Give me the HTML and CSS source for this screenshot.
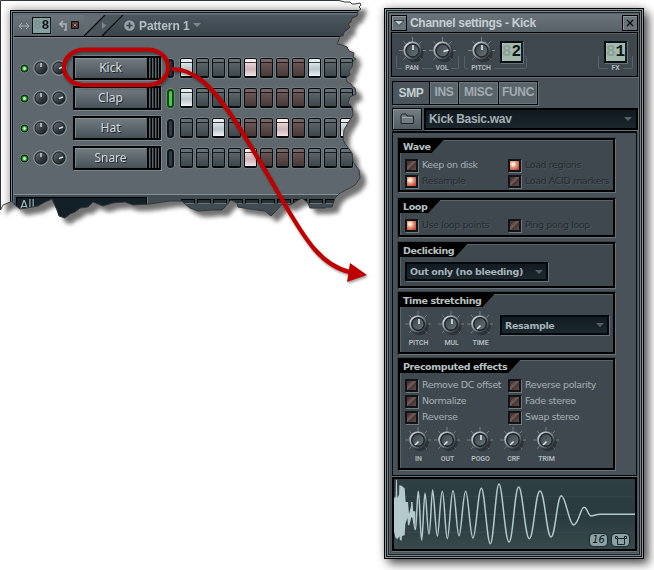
FILE: index.html
```html
<!DOCTYPE html>
<html lang="en">
<head>
<meta charset="utf-8">
<title>Channel settings</title>
<link rel="stylesheet" href="styles.css">
</head>
<body>
<svg class="defs" width="0" height="0" aria-hidden="true">
  <defs>
    <linearGradient id="rim" x1="0" y1="0" x2="1" y2="1"><stop offset="0" stop-color="#e4e8e9"/><stop offset=".5" stop-color="#7c868b"/><stop offset="1" stop-color="#1d2226"/></linearGradient>
    <linearGradient id="cap" x1="0" y1="0" x2="1" y2="1"><stop offset="0" stop-color="#39434a"/><stop offset="1" stop-color="#69747a"/></linearGradient>
    <linearGradient id="mini" x1="0" y1="0" x2="1" y2="1"><stop offset="0" stop-color="#6c757a"/><stop offset=".5" stop-color="#394146"/><stop offset="1" stop-color="#13181b"/></linearGradient>
    <symbol id="base" viewBox="0 0 28 28">
      <path d="M14 4V0M4 14H0M24 14h4M7 7L4.5 4.5M21 7l2.500-2.500M7 21l-2.500 2.500M21 21l2.500 2.500" stroke="#79848a" stroke-width="1"/>
      <circle cx="16" cy="16.500" r="9.500" fill="#171d21" opacity=".5"/>
      <circle cx="14" cy="14" r="9.500" fill="#20272c"/>
      <circle cx="14" cy="14" r="8.500" fill="none" stroke="url(#rim)" stroke-width="2"/>
      <circle cx="14" cy="14" r="6.500" fill="url(#cap)" stroke="#1d2429" stroke-width="1"/>
    </symbol>
    <symbol id="dial" viewBox="0 0 16 16">
      <circle cx="8" cy="8" r="7.300" fill="#4b555a" stroke="#929ba0" stroke-width="1"/>
      <circle cx="8" cy="8" r="5.900" fill="url(#mini)" stroke="#171d20" stroke-width=".8"/>
    </symbol>
  </defs>
</svg>
<main class="stage">
  <section class="torn">
    <div class="shot">
      <div class="rack">
        <header class="rack-head">
          <div class="head-left">
            <svg width="12" height="8" viewBox="0 0 12 8"><path d="M1 4h10M4 1L1 4l3 3M8 1l3 3-3 3" fill="none" stroke="#a5afb5"/></svg>
            <div class="lcd lcd-small"><i>8</i><b>8</b></div>
            <svg class="undo" width="21" height="11" viewBox="0 0 21 11"><path d="M4 1L1 4l3 3M1 4h6v6H5" fill="none" stroke="#a9b2b6" stroke-width="1.600"/><path d="M12.500 1.500h7v7h-7z" fill="#4f322e" stroke="#111"/><path d="M14.500 3.500l3 3M17.500 3.500l-3 3" stroke="#a58478"/></svg>
          </div>
          <svg class="slashes" width="42" height="21" viewBox="0 0 42 21"><path d="M0 0h21L0 21z" fill="#626b72"/><path d="M21 0h18L18 21H0z" fill="#4b555c"/><path d="M0 21L21 0M18 21L39 0" stroke="#080b0d" stroke-width="1.300"/><path d="M18 7l4 3.500-4 3.500z" fill="#7d878d"/></svg>
          <svg class="plus" width="11" height="11" viewBox="0 0 11 11"><circle cx="5.500" cy="5.500" r="5.300" fill="#98a2a8"/><path d="M5.500 2.500v6M2.500 5.500h6" stroke="#39434a" stroke-width="1.700"/></svg>
          <span class="pattern">Pattern 1</span>
          <svg width="8" height="5" viewBox="0 0 8 5"><path d="M0 0h8L4 4z" fill="#7c868d"/></svg>
        </header>
        <div class="tracks">
          <div class="track"><i class="led"></i><svg class="dial"><use href="#dial"/><path d="M8 3v4"/></svg><svg class="dial"><use href="#dial"/><path d="M8 8.500l4-1.500"/></svg><div class="name"><span>Kick</span><i></i></div><i class="pill"></i><div class="steps"><b class="on"></b><b></b><b></b><b></b><b class="r on"></b><b class="r"></b><b class="r"></b><b class="r"></b><b class="on"></b><b></b><b></b></div></div>
          <div class="track"><i class="led"></i><svg class="dial"><use href="#dial"/><path d="M8 3v4"/></svg><svg class="dial"><use href="#dial"/><path d="M8 8.500l4-1.500"/></svg><div class="name"><span>Clap</span><i></i></div><i class="pill lit"></i><div class="steps"><b class="on"></b><b></b><b></b><b></b><b class="r"></b><b class="r"></b><b class="r"></b><b class="r"></b><b></b><b></b><b></b></div></div>
          <div class="track"><i class="led"></i><svg class="dial"><use href="#dial"/><path d="M8 3v4"/></svg><svg class="dial"><use href="#dial"/><path d="M8 8.500l4-1.500"/></svg><div class="name"><span>Hat</span><i></i></div><i class="pill"></i><div class="steps"><b></b><b></b><b class="on"></b><b></b><b class="r"></b><b class="r"></b><b class="r on"></b><b class="r"></b><b></b><b></b><b class="on"></b></div></div>
          <div class="track"><i class="led"></i><svg class="dial"><use href="#dial"/><path d="M8 3v4"/></svg><svg class="dial"><use href="#dial"/><path d="M8 8.500l4-1.500"/></svg><div class="name"><span>Snare</span><i></i></div><i class="pill"></i><div class="steps"><b></b><b></b><b></b><b></b><b class="r on"></b><b class="r"></b><b class="r"></b><b class="r"></b><b></b><b></b><b></b></div></div>
        </div>
        <footer class="rack-foot"><div class="filter">All</div><div class="slots"><i></i><i></i><i></i><i></i><i></i><i></i><i></i><i></i><i></i><i></i></div></footer>
      </div>
    </div>
  </section>

  <section class="window">
    <header class="title">
      <div class="tbtn"><svg width="10" height="6" viewBox="0 0 10 6"><path d="M0 .5h10L5 5.500z" fill="#c3ccd0" stroke="#1b2327" stroke-width=".8"/></svg></div>
      <h1>Channel settings - Kick</h1>
      <div class="tbtn"><svg width="8" height="8" viewBox="0 0 8 8"><path d="M1 1l6 6M7 1L1 7" stroke="#06090b" stroke-width="1.300"/></svg></div>
    </header>
    <div class="top">
      <div class="bracket pv">
        <div class="knob"><svg><use href="#base"/><path d="M14 8v5"/></svg><span>PAN</span></div>
        <div class="knob"><svg><use href="#base"/><path d="M14.500 14.500l5-1.500"/></svg><span>VOL</span></div>
      </div>
      <div class="bracket pp">
        <div class="knob"><svg><use href="#base"/><path d="M14 8v5"/></svg><span>PITCH</span></div>
        <div class="lcd"><i>8</i><b>2</b></div>
      </div>
      <div class="bracket fx"><div class="lcd"><i>8</i><b>1</b></div><span>FX</span></div>
    </div>
    <nav class="tabs"><span class="active">SMP</span><span>INS</span><span>MISC</span><span>FUNC</span></nav>
    <div class="file">
      <div class="folder"><svg width="15" height="12" viewBox="0 0 15 12"><path d="M1 10.500V2l1-1h4l1 2h6.500v7.500z" fill="#717b80" stroke="#20272b"/><path d="M2 4.500h10" stroke="#a1aaae"/></svg></div>
      <div class="field">Kick Basic.wav<i class="caret"></i></div>
    </div>
    <div class="page">
      <section class="group wave"><h2>Wave</h2>
        <div class="checks"><label><i></i>Keep on disk</label><label class="dim"><i class="on"></i>Load regions</label><label class="dim"><i class="on"></i>Resample</label><label class="dim"><i></i>Load ACID markers</label></div>
      </section>
      <section class="group loop"><h2>Loop</h2>
        <div class="checks"><label class="dim"><i class="on"></i>Use loop points</label><label class="dim"><i></i>Ping pong loop</label></div>
      </section>
      <section class="group declick"><h2>Declicking</h2><div class="combo">Out only (no bleeding)<i class="caret"></i></div></section>
      <section class="group stretch"><h2>Time stretching</h2>
        <div class="knobs">
          <div class="knob"><svg><use href="#base"/><path d="M14 8v5"/></svg><span>PITCH</span></div>
          <div class="knob"><svg><use href="#base"/><path d="M14 8v5"/></svg><span>MUL</span></div>
          <div class="knob"><svg><use href="#base"/><path d="M13.500 14.500L10 18"/></svg><span>TIME</span></div>
          <div class="combo">Resample<i class="caret"></i></div>
        </div>
      </section>
      <section class="group pre"><h2>Precomputed effects</h2>
        <div class="checks"><label><i></i>Remove DC offset</label><label><i></i>Reverse polarity</label><label><i></i>Normalize</label><label><i></i>Fade stereo</label><label><i></i>Reverse</label><label><i></i>Swap stereo</label></div>
        <div class="knobs">
          <div class="knob"><svg><use href="#base"/><path d="M13.500 14.500L10 18"/></svg><span>IN</span></div>
          <div class="knob"><svg><use href="#base"/><path d="M13.500 14.500L10 18"/></svg><span>OUT</span></div>
          <div class="knob"><svg><use href="#base"/><path d="M14 8v5"/></svg><span>POGO</span></div>
          <div class="knob"><svg><use href="#base"/><path d="M13.500 14.500L10 18"/></svg><span>CRF</span></div>
          <div class="knob"><svg><use href="#base"/><path d="M13.500 14.500L10 18"/></svg><span>TRIM</span></div>
        </div>
      </section>
    </div>
    <div class="scope">
      <svg viewBox="42 43 723 210" preserveAspectRatio="none">
        <path d="M48 43v210M42 149H765M42 95H765M42 203H765" stroke="#4c5d60" stroke-width="2" opacity=".5"/>
        <path d="M42 100L47 96L48 45L51 46L52 100L57 90L58 62L67 64L69 68L74 70L77 112L84 112L87 148L93 125L96 110L99 140L106 140L106 195L100 160L94 158L88 182L84 182L82 160L76 178L74 212L66 214L65 228L60 226L58 215L52 224L46 218L42 200Z" fill="#b3c9cc"/>
        <path d="M95 112S102 195 106 195S111 80 115 80S121 226 125 226S131 86 135 86S142 208 147 208S154 76 158 76S167 214 172 214S181 80 187 80S196 222 202 222S212 78 219 78S230 213 237 213S249 80 257 80S270 220 279 220S294 71 304 71S321 237 331 237S347 58 357 58S375 232 387 232S404 67 416 67S435 222 448 222S466 79 480 79S500 217 513 217S531 93 544 93S567 181 581 181S602 128 612 128S625 154 633 154S648 149 660 149H765" fill="none" stroke="#b3c9cc" stroke-width="4.500"/>
      </svg>
      <div class="badges"><span>16</span><span><svg width="12" height="9" viewBox="0 0 12 9"><path d="M2.500 2.500h7v6h-7zM.5.500h2v2h-2zM9.500.500h2v2h-2z" fill="none" stroke="#142428"/></svg></span></div>
    </div>
  </section>

  <svg class="overlay" width="384" height="300" viewBox="0 0 384 300">
    <path class="tear" d="M.5 210V.5H339L345 2L350 2L352 4L355 4L360 3L361 5L359 7L361 9L358 11L357 16L352 18L351 22L348 24L350 27L347 30L344 32L343 36L340 36L338 42L337 44L342 45L347 47L349 51L354 53L353 57L356 59L353 61L352 67L349 71L350 75L346 78L347 82L351 84L353 87L355 88L356 94L350 97L348 103L352 107L353 115L348 123L344 130L343 140L346 145L352 153L353 162L359 170L360 178L355 185L350 188L340 193L335 198L332 207L327 207L325 208L310 208L308 203L302 198L290 205L283 203L277 210L271 216L265 211L250 209L238 207L237 203L231 200L225 207L222 210L213 210L198 211L190 208L185 204L182 201L170 201L150 204L133 205L125 202L113 203L103 206L93 202L88 207L80 208L75 212L70 214L65 218L59 216L57 210L52 199L45 202L38 206L27 208L20 209L15 205L12 201L8 203L3 205Z"/>
    <g class="mark"><rect x="64" y="49.500" width="104" height="35.500" rx="20" ry="17.500"/><path d="M172 69C196 69 213 89 229 112S262 165 284 203S322 266 350 272"/><path class="tip" d="M350 263L367 275L347 282Z"/></g>
  </svg>
</main>
</body>
</html>
```
FILE: styles.css
```css
* { box-sizing: border-box; }
body { margin: 0; background: #fff; font-family: "DejaVu Sans", sans-serif; }
.defs { position: absolute; }
.stage { position: relative; width: 654px; height: 570px; overflow: hidden; display: flex; align-items: flex-start; }
.overlay { position: absolute; left: 0; top: 0; }
.tear { fill: none; stroke: #33373a; stroke-width: 1; }
.mark { fill: none; stroke: #c00000; stroke-width: 4.2; filter: drop-shadow(1px 2px 1px rgba(0,0,0,.35)); }
.mark .tip { fill: #c00000; stroke: none; }

/* Torn-off picture of the step sequencer */
.torn { flex: none; width: 384px; height: 240px; filter: drop-shadow(6px 6px 2px rgba(0,0,0,.55)); }
.shot {
  width: 384px; height: 225px; padding: 10px 0 0 10px; background: #fff; overflow: hidden;
  clip-path: path("M0 210V0H339L345 2L350 2L352 4L355 4L360 3L361 5L359 7L361 9L358 11L357 16L352 18L351 22L348 24L350 27L347 30L344 32L343 36L340 36L338 42L337 44L342 45L347 47L349 51L354 53L353 57L356 59L353 61L352 67L349 71L350 75L346 78L347 82L351 84L353 87L355 88L356 94L350 97L348 103L352 107L353 115L348 123L344 130L343 140L346 145L352 153L353 162L359 170L360 178L355 185L350 188L340 193L335 198L332 207L327 207L325 208L310 208L308 203L302 198L290 205L283 203L277 210L271 216L265 211L250 209L238 207L237 203L231 200L225 207L222 210L213 210L198 211L190 208L185 204L182 201L170 201L150 204L133 205L125 202L113 203L103 206L93 202L88 207L80 208L75 212L70 214L65 218L59 216L57 210L52 199L45 202L38 206L27 208L20 209L15 205L12 201L8 203L3 205Z");
}
.rack {
  width: 380px; height: 220px; padding: 5px 0 0 4px; background: #5e676d; color: #c8d0d4;
  box-shadow: 0 0 9px rgba(0,0,0,.45), inset 1px 1px #000, inset 2px 2px #7b868c, inset 3px 3px #10161a, inset 4px 4px #68737a;
}
.rack-head { height: 22px; display: flex; align-items: center; background: linear-gradient(#4b565e, #39434a); border-bottom: 1px solid #000; box-shadow: 0 1px #7b858b; }
.head-left { width: 70px; height: 21px; padding: 0 0 0 4px; display: flex; align-items: center; gap: 2px; background: linear-gradient(#6a747a, #596168); }
.undo { margin-left: 6px; }
.slashes { flex: none; }
.plus { margin: 0 4px 0 -2px; }
.pattern { font: bold 12px "Liberation Sans", sans-serif; color: #b4bec4; margin-right: 4px; letter-spacing: -.1px; }
.lcd { width: 23px; height: 22px; border: 2px solid #0a0f11; border-right-color: #171f22; background: #a3b9ae; display: flex; align-items: center; justify-content: center; font: bold 15px/17px "Liberation Mono", monospace; box-shadow: 1px 1px #66727a; }
.lcd i { color: #8a9f95; font-style: normal; }
.lcd b { color: #0d1614; }
.lcd-small { width: 19px; height: 17px; font-size: 13px; border-width: 1px; background: #89a0a0; }
.lcd-small i { color: #7a9090; }

.tracks { padding-top: 16px; height: 157px; }
.track { height: 30px; padding-left: 6px; display: flex; align-items: center; }
.led { width: 9px; height: 9px; border-radius: 50%; background: radial-gradient(#eaffe0 0 10%, #35a835 30%, #0a3411 50%, #0a3411 58%, #7f8b8a 68%); margin-right: 4px; flex: none; }
.dial { width: 16px; height: 16px; margin-right: 2px; flex: none; stroke: #d6dcdf; stroke-width: 1.4; overflow: visible; }
.name { width: 88px; height: 24px; margin-left: 4px; flex: none; display: flex; border: 2px solid #040607; background: #040607; box-shadow: 1px 1px #7c868b, 0 -1px #747e82; }
.name span { width: 72px; text-align: center; background: linear-gradient(#707a7f, #49535a); border: 1px solid; border-color: #8a9498 #59636a #464f55 #7c868b; text-shadow: 1px 1px #252d31; font: 12px/17px "Noto Sans", sans-serif; color: #d4dade; padding-right: 1px; }
.name i { flex: 1; margin-left: 1px; background: repeating-linear-gradient(90deg, #000 0 1px, #5c656b 1px 2px, #2b3236 2px 3px); }
.pill { width: 7px; height: 19px; margin: 0 6px 0 6px; flex: none; border-radius: 4px; border: 2px solid #10161b; background: #303b48; box-shadow: 0 0 0 1px #727d83; }
.pill.lit { background: #59c259; border-color: #0f4a16; box-shadow: 0 0 0 1px #65916a; }
.steps { display: flex; gap: 3px; flex: none; }
.steps b { width: 13px; height: 20px; border: 2px solid #0a0d0f; border-width: 1px 1px 2px 1px; border-radius: 2px; background: linear-gradient(#666f73 0 3px, #161b1e 3px 4px, #5a6468 4px, #3e484c); box-shadow: 0 0 0 1px #6f7a7f; }
.steps .r { background: linear-gradient(#756666 0 3px, #1d1516 3px 4px, #695555 4px, #483939); }
.steps .on { background: linear-gradient(#e8eef0 0 3px, #333b3f 3px 4px, #dbe5e9 4px, #b9c5ca 60%, #f0f4f6); }
.steps .r.on { background: linear-gradient(#fff0f0 0 3px, #48383a 3px 4px, #ead5d7 4px, #cdb4b7 60%, #f3e3e4); }
.rack-foot { height: 30px; padding-left: 2px; display: flex; gap: 34px; border-top: 1px solid #858f94; background: #414c52; }
.filter { width: 131px; height: 28px; margin-top: 2px; padding: 1px 3px; background: #142027; border: 1px solid #000; box-shadow: 1px 0 #69757b; font: 12px/13px "DejaVu Sans", sans-serif; color: #a9b6bb; }
.slots { display: flex; gap: 2px; margin-top: 4px; }
.slots i { width: 14px; height: 5px; background: #263237; border: 1px solid #020405; border-bottom-color: #69757b; }

/* Channel settings window */
.window {
  flex: none; width: 260px; height: 551px; margin-top: 8px; padding: 6px 6px 0; color: #aeb7bb; background: #495259;
  box-shadow: 5px 5px 9px rgba(0,0,0,.6), 0 0 8px rgba(0,0,0,.3), inset 0 0 0 1px #000, inset 0 0 0 2px #8d979c, inset 0 0 0 3px #10161a, inset 0 0 0 4px #7b868b, inset 0 0 0 5px #1a2125, inset 0 0 0 6px #58636a;
}
.title { height: 18px; display: flex; align-items: center; padding: 0 0 0 1px; background: linear-gradient(#6a7379, #596168); }
.title h1 { flex: 1; margin: 0 0 0 3px; font: bold 12px/16px "Liberation Sans", sans-serif; letter-spacing: -.3px; color: #c5cfd4; white-space: nowrap; }
.tbtn { width: 16px; height: 16px; border: 1px solid #000; box-shadow: inset 1px 1px #8a9499; background: #69747a; display: flex; align-items: center; justify-content: center; }
.top { height: 45px; margin-left: 1px; background: #3e474d; border: 1px solid #000; box-shadow: inset 0 1px #59636a, 0 1px #68737a; padding: 4px 4px 0 4px; display: flex; }
.bracket { height: 35px; display: flex; position: relative; }
.bracket::before { content: ""; position: absolute; left: 0; right: 0; bottom: 3px; height: 12px; border: 1px solid #566168; border-top: 0; border-radius: 0 0 2px 2px; }
.knob { width: 28px; height: 36px; display: flex; flex-direction: column; align-items: center; position: relative; flex: none; }
.knob svg { width: 27px; height: 27px; overflow: visible; flex: none; stroke: #e3e8ea; stroke-width: 1.6; }
.knob svg use { stroke: none; }
.knob span, .fx span { font: 7px/8px "Roboto", sans-serif; font-weight: 600; letter-spacing: -.1px; color: #b2bbc0; padding: 0 3px; background: #3e474d; }
.pv { width: 63px; padding-left: 2px; gap: 2px; }
.pp { width: 63px; margin-left: 5px; padding-left: 3px; gap: 5px; }
.bracket .lcd { position: relative; margin-top: 4px; font-size: 16px; }
.fx { width: 35px; margin-left: auto; flex-direction: column; align-items: center; }
.fx span { position: relative; margin-top: 1px; }
.tabs { width: 146px; height: 24px; margin: 4px 0 0 2px; padding: 1px; display: flex; gap: 1px; background: #05080a; box-shadow: 1px 1px #69747a; }
.tabs span { width: 28px; flex: none; font: bold 12px/19px "Liberation Sans", sans-serif; letter-spacing: -.3px; color: #a2abb0; text-align: center; background: #59636a; border: 1px solid #6d777d; }
.tabs .active { width: 36px; background: #4b555b; color: #c6cfd3; line-height: 21px; border-color: #4b555b; }
.tabs span:nth-child(n+3) { width: 39px; }
.tabs span:nth-child(4) { width: 38px; }
.file { height: 22px; margin: 3px 0 0 2px; display: flex; gap: 2px; }
.folder { width: 30px; border: 1px solid #05080a; background: linear-gradient(#747e83, #505a60); display: flex; align-items: center; justify-content: center; box-shadow: inset 1px 1px #899398; }
.field { flex: 1; display: flex; align-items: center; justify-content: space-between; border: 2px solid #000; background: linear-gradient(#101920, #1b252c); font: bold 12px/17px "Liberation Sans", sans-serif; letter-spacing: -.3px; padding: 0 4px 0 3px; color: #a3afb5; box-shadow: 1px 1px #69747a; }
.caret { width: 0; height: 0; border: 4px solid transparent; border-top-color: #556066; border-bottom: 0; }
.page { height: 345px; margin: 1px 1px 0 2px; padding: 5px 0 0 5px; border: 1px solid #05080a; border-top: 2px solid #05080a; background: #495259; box-shadow: 0 1px #69747a; }
.group { width: 217px; border: 2px solid #000; background: #3f484e; box-shadow: 1px 1px #68737a, inset 1px 1px #59646a, 0 0 0 1px #39434a; margin-bottom: 5px; }
.group h2 { display: block; width: fit-content; height: 13px; margin: 0; padding: 0 13px 0 3px; background: #000; font: bold 9.5px/13px "DejaVu Sans", sans-serif; letter-spacing: -.4px; color: #b9c1c5; clip-path: polygon(0 0, 100% 0, calc(100% - 12px) 100%, 0 100%); white-space: nowrap; }
.wave { height: 54px; margin-bottom: 6px; }
.loop { height: 39px; }
.declick { height: 46px; margin-bottom: 4px; }
.stretch { height: 62px; margin-bottom: 4px; }
.pre { height: 112px; }
.checks { display: grid; grid-template-columns: 103px 1fr; grid-auto-rows: 16px; padding: 4px 0 0 5px; }
.checks label { display: flex; align-items: center; gap: 4px; font-size: 9.5px; letter-spacing: -.4px; line-height: 14px; white-space: nowrap; color: #a5afb5; }
.checks .dim { color: #252d32; text-shadow: 1px 1px #4b565c; }
.checks i { width: 13px; height: 13px; flex: none; border: 2px solid #101517; box-shadow: 1px 1px #707b80; background: linear-gradient(135deg, #4b3436 20%, #765d57 45%, #4a3435 60%, #665049); }
.checks i.on { background: radial-gradient(circle at 35% 35%, #fff0dc 0 15%, #eda286 35%, #c8493a 80%); }
.combo { display: flex; align-items: center; justify-content: space-between; border: 2px solid #05080a; background: linear-gradient(#111b21, #1c272e); box-shadow: 1px 1px #68737a; font: bold 9.5px/15px "DejaVu Sans", sans-serif; letter-spacing: -.35px; padding: 0 3px 0 3px; white-space: nowrap; color: #a6b2b8; }
.declick .combo { width: 143px; height: 19px; margin: 5px 0 0 5px; }
.knobs { display: flex; padding-left: 4px; }
.knobs .knob { height: 37px; }
.knobs .knob svg { width: 26px; height: 26px; margin-bottom: 2px; }
.knobs .knob span { margin-left: 1px; }
.stretch .knobs { padding-top: 4px; }
.stretch .knob:nth-child(1) { margin-right: 5px; }
.stretch .knob:nth-child(2) { margin-right: 1px; }
.stretch .combo { width: 109px; height: 20px; margin: 4px 0 0 6px; }
.pre .knobs { margin-top: 2px; }
.pre .knob:nth-child(1) { margin-right: 1px; }
.pre .knob:nth-child(n+2) { margin-right: 5px; }
.scope { height: 74px; margin: 1px 1px 0 2px; border: 2px solid #000; background: linear-gradient(#2f4044, #283a3e 50%, #38494c); box-shadow: 0 1px #68737a; position: relative; }
.scope > svg { display: block; width: 100%; height: 100%; }
.badges { position: absolute; right: 6px; bottom: 3px; display: flex; gap: 5px; }
.badges span { width: 17px; height: 12px; border-radius: 4px; background: #8ba1a3; color: #0c181b; display: flex; align-items: center; justify-content: center; font: italic 10px/12px "DejaVu Sans", sans-serif; box-shadow: 0 0 1px 1px #1c2b2f; }
```
